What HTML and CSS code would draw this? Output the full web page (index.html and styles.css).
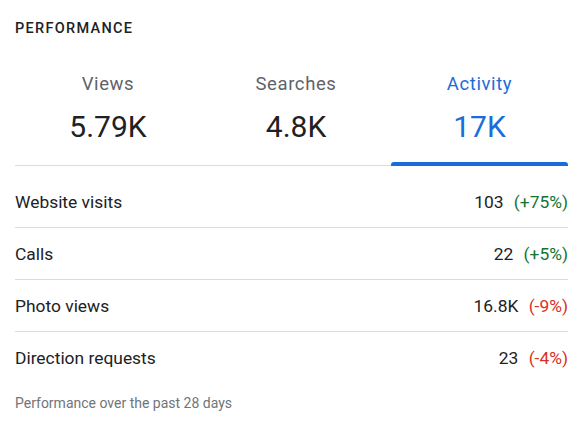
FILE: index.html
```html
<!DOCTYPE html>
<html lang="en">
<head>
  <meta charset="UTF-8">
  <title>Performance</title>
  <link rel="stylesheet" href="styles.css">
</head>
<body>
  <div class="card">
    <h2 class="title">PERFORMANCE</h2>
    <div class="tabs">
      <div class="tab">
        <div class="tab-label">Views</div>
        <div class="tab-value">5.79K</div>
      </div>
      <div class="tab">
        <div class="tab-label">Searches</div>
        <div class="tab-value">4.8K</div>
      </div>
      <div class="tab active">
        <div class="tab-label">Activity</div>
        <div class="tab-value">17K</div>
      </div>
    </div>
    <div class="rows">
      <div class="row">
        <span class="name">Website visits</span>
        <span class="num">103 <span class="delta up">(+75%)</span></span>
      </div>
      <div class="row">
        <span class="name">Calls</span>
        <span class="num">22 <span class="delta up">(+5%)</span></span>
      </div>
      <div class="row">
        <span class="name">Photo views</span>
        <span class="num">16.8K <span class="delta down">(-9%)</span></span>
      </div>
      <div class="row">
        <span class="name">Direction requests</span>
        <span class="num">23 <span class="delta down">(-4%)</span></span>
      </div>
    </div>
    <p class="note">Performance over the past 28 days</p>
  </div>
</body>
</html>
```

FILE: styles.css
```css
body {
  margin: 0;
  background: #fff;
  font-family: Roboto, "Liberation Sans", Arial, sans-serif;
  color: #202124;
}
.card {
  padding: 0 16px 0 15px;
}
.title {
  margin: 0;
  padding-top: 20px;
  font-size: 14.5px;
  font-weight: 500;
  letter-spacing: 1.3px;
  line-height: 18px;
  color: #202124;
}
.tabs {
  display: grid;
  grid-template-columns: 186px 190px 1fr;
  margin-top: 34px;
  border-bottom: 1px solid #dadce0;
}
.tab {
  position: relative;
  text-align: center;
  padding-bottom: 20px;
}
.tab-label {
  font-size: 18.5px;
  line-height: 24px;
  color: #5f6368;
  letter-spacing: 0.6px;
}
.tab-value {
  margin-top: 13px;
  font-size: 30px;
  line-height: 36px;
  color: #202124;
}
.tab.active .tab-label,
.tab.active .tab-value {
  color: #1a6dd8;
}
.tab.active::after {
  content: "";
  position: absolute;
  left: 0;
  right: 0;
  bottom: -1px;
  height: 4px;
  background: #1a6dd8;
  border-radius: 3px 3px 0 0;
}
.rows {
  margin-top: 10px;
}
.row {
  display: flex;
  justify-content: space-between;
  align-items: center;
  height: 52px;
  font-size: 17.4px;
  border-bottom: 1px solid #dadce0;
  box-sizing: border-box;
}
.row:last-child {
  border-bottom: none;
}
.num {
  white-space: pre;
}
.delta {
  margin-left: 6px;
}
.up {
  color: #137333;
}
.down {
  color: #d93025;
}
.note {
  margin: 10px 0 0;
  font-size: 14px;
  line-height: 18px;
  color: #70757a;
}
```
